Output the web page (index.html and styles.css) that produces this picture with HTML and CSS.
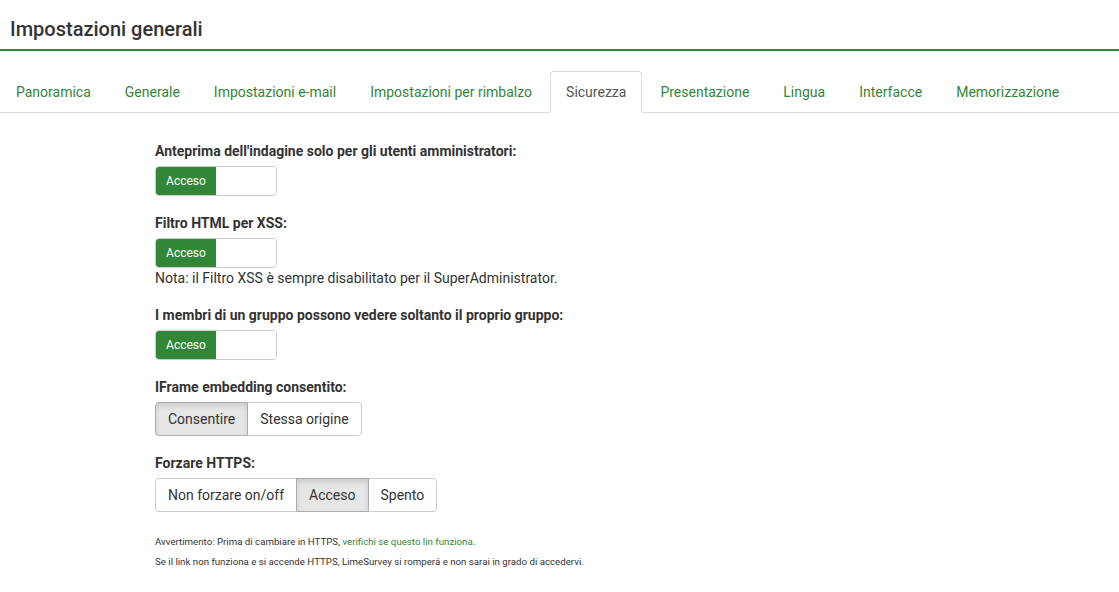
FILE: index.html
```html
<!DOCTYPE html>
<html lang="it">
<head>
<meta charset="utf-8">
<title>Impostazioni generali</title>
<link rel="stylesheet" href="styles.css">
</head>
<body>
<div class="header">
  <h1 class="title">Impostazioni generali</h1>
</div>
<ul class="tabs">
  <li class="tab"><a>Panoramica</a></li>
  <li class="tab"><a>Generale</a></li>
  <li class="tab"><a>Impostazioni e-mail</a></li>
  <li class="tab"><a>Impostazioni per rimbalzo</a></li>
  <li class="tab active"><a>Sicurezza</a></li>
  <li class="tab"><a>Presentazione</a></li>
  <li class="tab"><a>Lingua</a></li>
  <li class="tab"><a>Interfacce</a></li>
  <li class="tab"><a>Memorizzazione</a></li>
</ul>
<div class="content">
  <div class="form-group">
    <label class="label">Anteprima dell'indagine solo per gli utenti amministratori:</label>
    <div class="switch"><span class="switch-on">Acceso</span><span class="switch-handle"></span></div>
  </div>
  <div class="form-group">
    <label class="label">Filtro HTML per XSS:</label>
    <div class="switch"><span class="switch-on">Acceso</span><span class="switch-handle"></span></div>
    <div class="note">Nota: il Filtro XSS è sempre disabilitato per il SuperAdministrator.</div>
  </div>
  <div class="form-group">
    <label class="label">I membri di un gruppo possono vedere soltanto il proprio gruppo:</label>
    <div class="switch"><span class="switch-on">Acceso</span><span class="switch-handle"></span></div>
  </div>
  <div class="form-group">
    <label class="label">IFrame embedding consentito:</label>
    <div class="btn-group">
      <span class="btn active">Consentire</span><span class="btn">Stessa origine</span>
    </div>
  </div>
  <div class="form-group">
    <label class="label">Forzare HTTPS:</label>
    <div class="btn-group">
      <span class="btn">Non forzare on/off</span><span class="btn active">Acceso</span><span class="btn">Spento</span>
    </div>
  </div>
  <div class="warn">
    <p class="small">Avvertimento: Prima di cambiare in HTTPS, <a class="link">verifichi se questo lin funziona</a>.</p>
    <p class="small">Se il link non funziona e si accende HTTPS, LimeSurvey si romperá e non sarai in grado di accedervi.</p>
  </div>
</div>
</body>
</html>
```
FILE: styles.css
```css
* { box-sizing: border-box; }
html, body { margin: 0; padding: 0; background: #fff; }
body {
  font-family: Roboto, "Noto Sans", "Liberation Sans", sans-serif;
  font-size: 14px;
  line-height: 20px;
  color: #333;
}
.header {
  padding: 15px 10px 6px;
  border-bottom: 2px solid #328637;
}
.title {
  margin: 0;
  font-size: 20px;
  font-weight: 500;
  line-height: 28px;
  color: #333;
}
.tabs {
  list-style: none;
  margin: 20px 0 0;
  padding: 0;
  display: flex;
  border-bottom: 1px solid #ddd;
}
.tab {
  margin-bottom: -1px;
}
.tab a {
  display: block;
  padding: 10px 15px;
  line-height: 20px;
  margin-right: 2px;
  border: 1px solid transparent;
  border-radius: 4px 4px 0 0;
  color: #328637;
}
.tab.active a {
  color: #555;
  background: #fff;
  border-color: #ddd #ddd transparent;
}
.content {
  padding: 28px 0 0 155px;
}
.form-group {
  margin-bottom: 17px;
}
.label {
  display: block;
  font-weight: bold;
  margin-bottom: 5px;
  line-height: 20px;
}
.switch {
  display: flex;
  width: 122px;
  height: 30px;
  border: 1px solid #ccc;
  border-radius: 4px;
  overflow: hidden;
}
.switch-on {
  width: 60px;
  background: #328637;
  color: #fff;
  font-size: 12px;
  display: flex;
  align-items: center;
  justify-content: center;
}
.switch-handle {
  flex: 1;
  background: #fff;
}
.note {
  line-height: 20px;
}
.btn-group {
  display: inline-flex;
}
.btn {
  display: block;
  padding: 6px 12px;
  line-height: 20px;
  font-size: 14px;
  color: #333;
  background: #fff;
  border: 1px solid #ccc;
  margin-left: -1px;
}
.btn:first-child {
  margin-left: 0;
  border-radius: 4px 0 0 4px;
}
.btn:last-child {
  border-radius: 0 4px 4px 0;
}
.btn.active {
  background: #e6e6e6;
  border-color: #adadad;
  box-shadow: inset 0 3px 5px rgba(0,0,0,.125);
  position: relative;
}
.warn {
  padding-top: 3px;
}
.small {
  margin: 0;
  font-size: 9.7px;
  line-height: 20px;
}
.link {
  color: #328637;
}
```
